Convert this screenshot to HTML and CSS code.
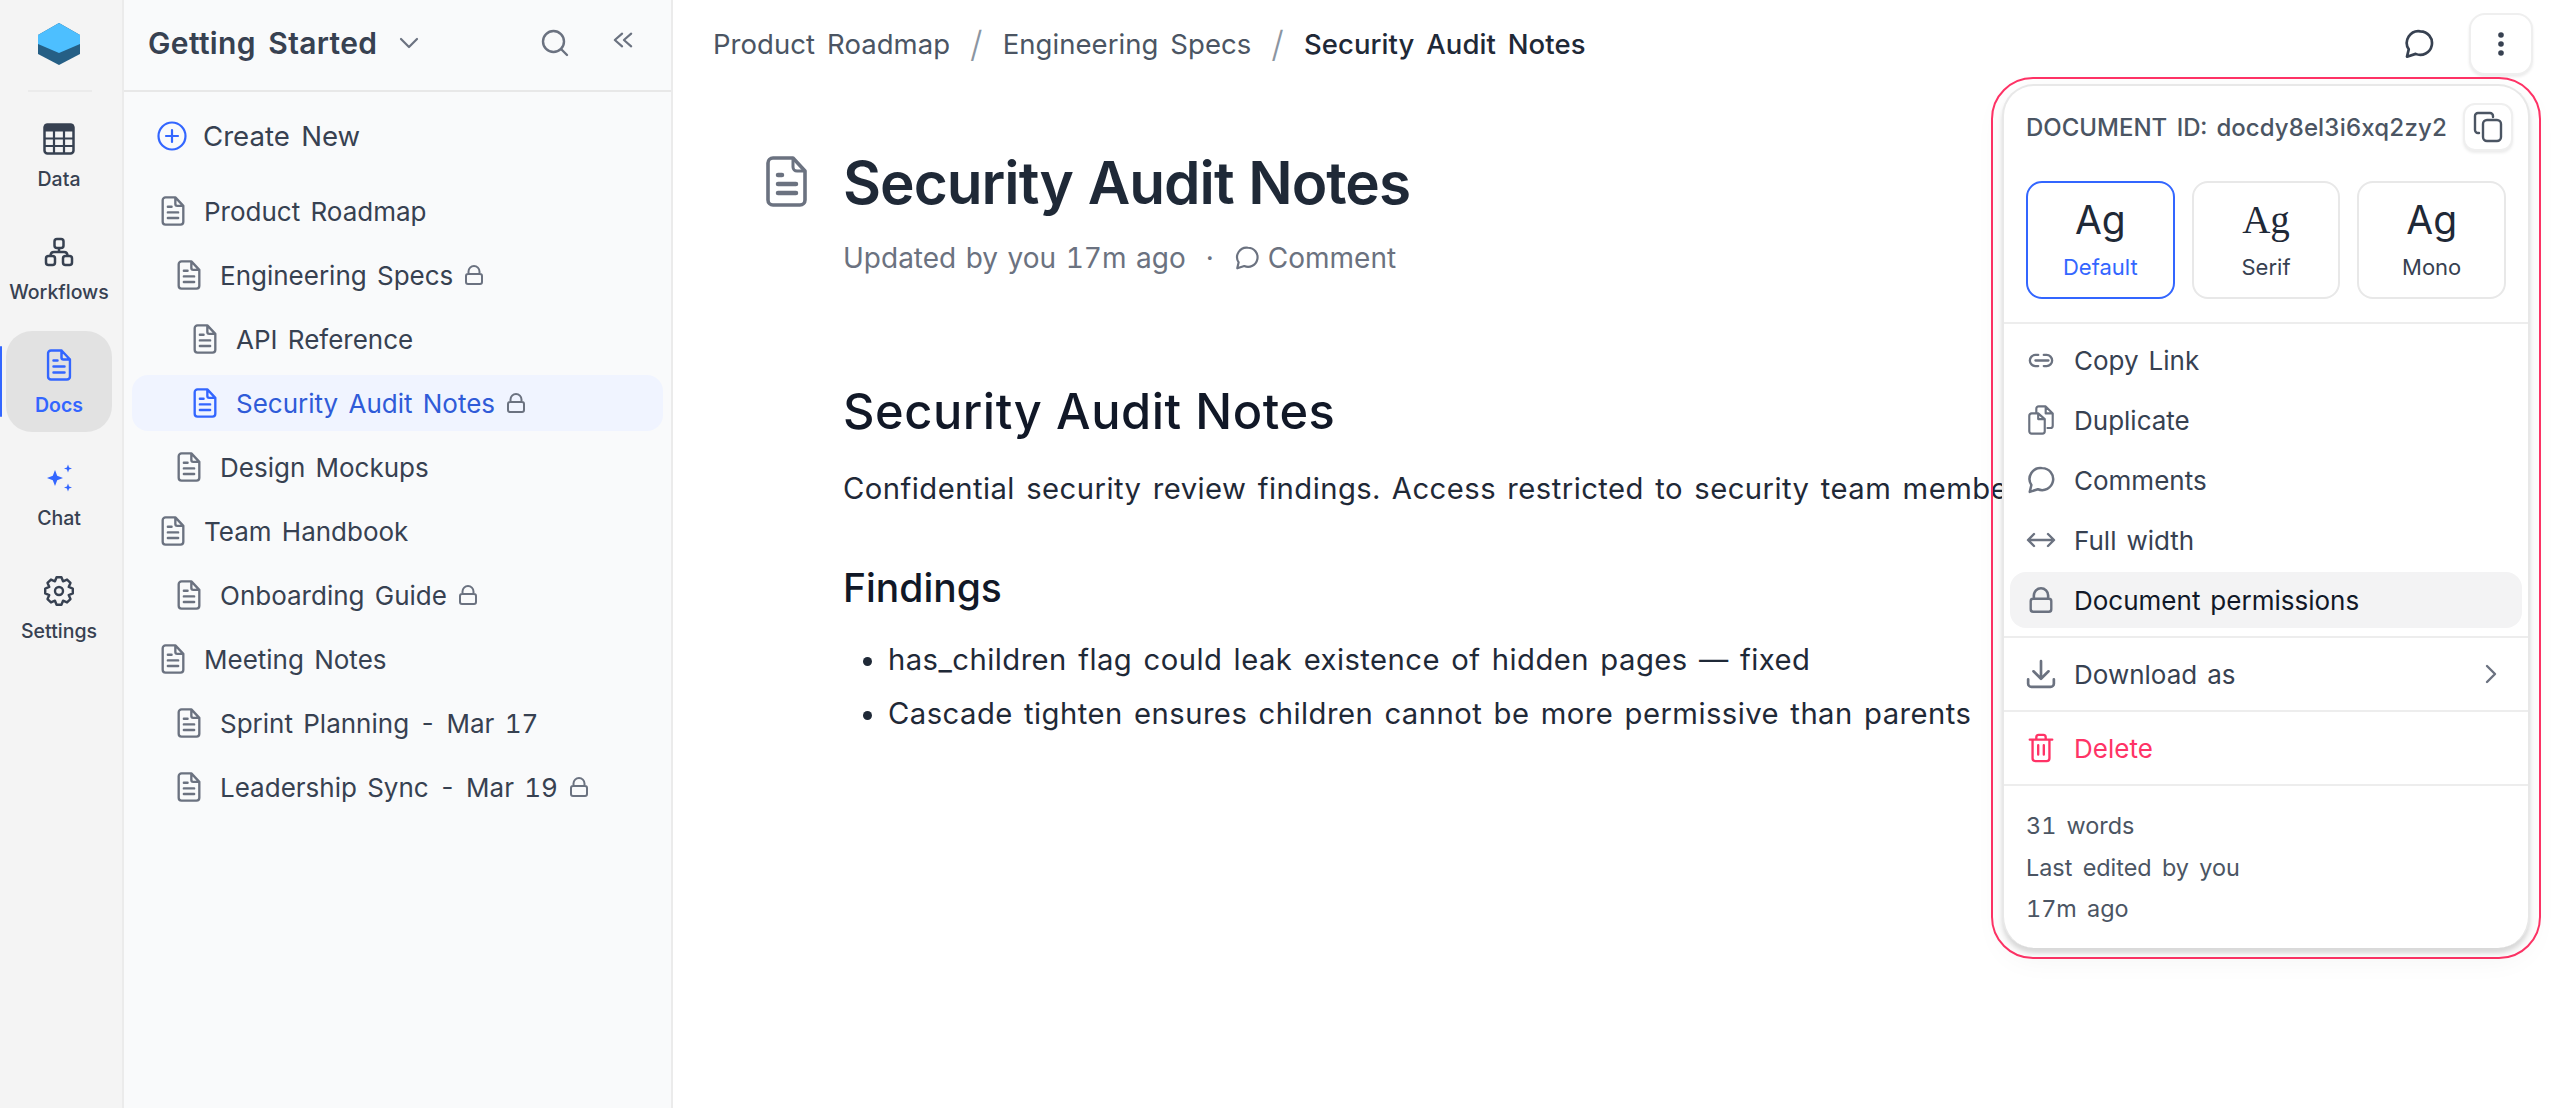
FILE: index.html
```html
<!DOCTYPE html>
<html lang="en">
<head>
<meta charset="utf-8">
<title>Security Audit Notes</title>
<link rel="stylesheet" href="styles.css">
</head>
<body>
<svg class="sprite" width="0" height="0">
  <symbol id="doc" viewBox="0 0 25 32"><path d="M4.500 1.500H15L23.500 10.500V27.500a3 3 0 0 1-3 3H4.500a3 3 0 0 1-3-3V4.500a3 3 0 0 1 3-3z M15 1.500V8.500a2 2 0 0 0 2 2H23.500 M7 11.500H11 M7 17.500H18 M7 23.500H18" fill="none" stroke="currentColor" stroke-width="2.500" stroke-linecap="round" stroke-linejoin="round"/></symbol>
  <symbol id="lock" viewBox="0 0 18 20"><path d="M3.500 9V6.500a5.500 5.500 0 0 1 11 0V9 M3 9H15a2 2 0 0 1 2 2V17a2 2 0 0 1-2 2H3a2 2 0 0 1-2-2V11a2 2 0 0 1 2-2z" fill="none" stroke="currentColor" stroke-width="2" stroke-linecap="round" stroke-linejoin="round"/></symbol>
  <symbol id="chat" viewBox="0 0 24 24"><path d="M13 2.500a8.800 8.800 0 1 1-3.500 16.900L3 21.500l1.300-5.500A8.800 8.800 0 0 1 13 2.500z" fill="none" stroke="currentColor" stroke-width="2" stroke-linejoin="round"/></symbol>
</svg>
<div class="app">
  <nav class="rail">
    <svg class="logo" viewBox="0 0 42 42"><polygon points="21,0 42,12 42,31 21,42 0,31 0,12" fill="#255f85"/><polygon points="21,0 42,12 42,21 21,30 0,21 0,12" fill="#4dbfff"/></svg>
    <div class="rail-sep"></div>
    <a class="rail-item">
      <svg class="rail-icon" viewBox="0 0 32 32"><rect x="1.500" y="1.500" width="29" height="29" rx="3" fill="none" stroke="currentColor" stroke-width="2.500"/><rect x="1.500" y="1.500" width="29" height="7" fill="currentColor"/><path d="M2 15.500H30M2 23H30M11 8V30M21 8V30" stroke="currentColor" stroke-width="2.200"/></svg>
      <span>Data</span>
    </a>
    <a class="rail-item">
      <svg class="rail-icon" viewBox="0 0 32 32"><g fill="none" stroke="currentColor" stroke-width="2.500" stroke-linejoin="round"><rect x="11.500" y="3" width="9" height="9" rx="2.500"/><rect x="3" y="20" width="9" height="9" rx="2.500"/><rect x="20" y="20" width="9" height="9" rx="2.500"/><path d="M16 12V16M7.500 20C7.500 17 9 16 11 16H21C23 16 24.500 17 24.500 20"/></g></svg>
      <span>Workflows</span>
    </a>
    <a class="rail-item active">
      <svg class="rail-icon" viewBox="0 0 25 32"><use href="#doc"/></svg>
      <span>Docs</span>
    </a>
    <a class="rail-item">
      <svg class="rail-icon" viewBox="0 0 32 32"><g fill="#3366ff"><path d="M12 8L14.200 13.800 20 16 14.200 18.200 12 24 9.800 18.200 4 16 9.800 13.800z"/><path d="M25 2.500L26.100 5.400 29 6.500 26.100 7.600 25 10.500 23.900 7.600 21 6.500 23.900 5.400z"/><path d="M25 21.500L26.100 24.400 29 25.500 26.100 26.600 25 29.500 23.900 26.600 21 25.500 23.900 24.400z"/></g></svg>
      <span>Chat</span>
    </a>
    <a class="rail-item">
      <svg class="rail-icon" viewBox="0 0 32 32"><g fill="none" stroke="currentColor" stroke-width="2.400" stroke-linejoin="round"><path d="M13.570 2.210L18.430 2.210L20.020 6.300L24.030 4.530L27.470 7.970L25.700 11.980L29.790 13.570L29.790 18.430L25.700 20.020L27.470 24.030L24.030 27.470L20.020 25.700L18.430 29.790L13.570 29.790L11.980 25.700L7.970 27.470L4.530 24.030L6.300 20.020L2.210 18.430L2.210 13.570L6.300 11.980L4.530 7.970L7.970 4.530L11.980 6.300Z"/><circle cx="16" cy="16" r="4"/></g></svg>
      <span>Settings</span>
    </a>
  </nav>

  <aside class="sidebar">
    <header class="side-head">
      <h2 class="space">Getting Started</h2>
      <svg class="caret" viewBox="0 0 20 12"><path d="M2 2l8 8 8-8" fill="none" stroke="currentColor" stroke-width="2.200" stroke-linecap="round" stroke-linejoin="round"/></svg>
      <svg class="search" viewBox="0 0 28 28"><circle cx="12.500" cy="12.500" r="10.500" fill="none" stroke="currentColor" stroke-width="2.400"/><path d="M20.500 20.500L26 26" stroke="currentColor" stroke-width="2.400" stroke-linecap="round"/></svg>
      <svg class="collapse" viewBox="0 0 22 18"><path d="M10 2L2 9l8 7M20 2l-8 7 8 7" fill="none" stroke="currentColor" stroke-width="2.400" stroke-linecap="round" stroke-linejoin="round"/></svg>
    </header>
    <div class="create">
      <svg class="plus" viewBox="0 0 30 30"><circle cx="15" cy="15" r="13.500" fill="none" stroke="currentColor" stroke-width="2.200"/><path d="M15 9V21M9 15H21" stroke="currentColor" stroke-width="2.200" stroke-linecap="round"/></svg>
      <span>Create New</span>
    </div>
    <ul class="tree">
      <li class="row l0"><svg class="ico"><use href="#doc"/></svg><span>Product Roadmap</span></li>
      <li class="row l1"><svg class="ico"><use href="#doc"/></svg><span>Engineering Specs</span><svg class="lk"><use href="#lock"/></svg></li>
      <li class="row l2"><svg class="ico"><use href="#doc"/></svg><span>API Reference</span></li>
      <li class="row l2 current"><svg class="ico"><use href="#doc"/></svg><span>Security Audit Notes</span><svg class="lk"><use href="#lock"/></svg></li>
      <li class="row l1"><svg class="ico"><use href="#doc"/></svg><span>Design Mockups</span></li>
      <li class="row l0"><svg class="ico"><use href="#doc"/></svg><span>Team Handbook</span></li>
      <li class="row l1"><svg class="ico"><use href="#doc"/></svg><span>Onboarding Guide</span><svg class="lk"><use href="#lock"/></svg></li>
      <li class="row l0"><svg class="ico"><use href="#doc"/></svg><span>Meeting Notes</span></li>
      <li class="row l1"><svg class="ico"><use href="#doc"/></svg><span>Sprint Planning - Mar 17</span></li>
      <li class="row l1"><svg class="ico"><use href="#doc"/></svg><span>Leadership Sync - Mar 19</span><svg class="lk"><use href="#lock"/></svg></li>
    </ul>
  </aside>

  <main class="main">
    <header class="topbar">
      <span class="crumb">Product Roadmap</span><span class="slash">/</span>
      <span class="crumb">Engineering Specs</span><span class="slash">/</span>
      <span class="crumb now">Security Audit Notes</span>
      <svg class="top-chat"><use href="#chat"/></svg>
      <button class="more"><svg viewBox="0 0 8 26" class="dots"><circle cx="4" cy="4" r="2.800"/><circle cx="4" cy="13" r="2.800"/><circle cx="4" cy="22" r="2.800"/></svg></button>
    </header>
    <article class="page">
      <div class="title-row">
        <svg class="title-icon" viewBox="0 0 41 51"><path d="M7 2H27L39 15V44a5 5 0 0 1-5 5H7a5 5 0 0 1-5-5V7a5 5 0 0 1 5-5z" fill="none" stroke="currentColor" stroke-width="3.600" stroke-linejoin="round"/><path d="M27 2V11a4 4 0 0 0 4 4H39" fill="none" stroke="currentColor" stroke-width="3"/><path d="M12 19H16M12 28H30M12 37H30" stroke="currentColor" stroke-width="4.500" stroke-linecap="round"/></svg>
        <div>
          <h1 class="title">Security Audit Notes</h1>
          <p class="meta"><span>Updated by you 17m ago</span><span class="dot">·</span><svg class="meta-chat"><use href="#chat"/></svg><span>Comment</span></p>
        </div>
      </div>
      <div class="body">
        <h2 class="h1">Security Audit Notes</h2>
        <p class="para">Confidential security review findings. Access restricted to security team members.</p>
        <h3 class="h2">Findings</h3>
        <ul class="list">
          <li>has_children flag could leak existence of hidden pages — fixed</li>
          <li>Cascade tighten ensures children cannot be more permissive than parents</li>
        </ul>
      </div>
    </article>
  </main>
</div>

<div class="focus-ring">
  <section class="menu">
    <div class="id-row">
      <span class="doc-id">DOCUMENT ID: docdy8el3i6xq2zy2</span>
      <button class="copy"><svg viewBox="0 0 30 32"><path d="M6 22H5a3 3 0 0 1-3-3V5a3 3 0 0 1 3-3h12a3 3 0 0 1 3 3v1" fill="none" stroke="currentColor" stroke-width="2.400" stroke-linecap="round"/><rect x="10" y="9" width="18" height="21" rx="4" fill="none" stroke="currentColor" stroke-width="2.400"/></svg></button>
    </div>
    <div class="fonts">
      <div class="tile on"><b class="ag">Ag</b><span>Default</span></div>
      <div class="tile"><b class="ag serif">Ag</b><span>Serif</span></div>
      <div class="tile"><b class="ag">Ag</b><span>Mono</span></div>
    </div>
    <div class="group">
      <div class="item"><svg class="i-link" viewBox="0 0 28 16"><path d="M11 2H8a6 6 0 0 0 0 12h3M17 2h3a6 6 0 0 1 0 12h-3M8 8H22" fill="none" stroke="currentColor" stroke-width="2.500" stroke-linecap="round"/></svg><span>Copy Link</span></div>
      <div class="item"><svg viewBox="0 0 28 32"><path d="M9 9V4a2.500 2.500 0 0 1 2.500-2.500H19L26.500 9V22a2.500 2.500 0 0 1-2.500 2.500H20M19 2V9H26M4 9H11L18 15V28a2.500 2.500 0 0 1-2.500 2.500H4A2.500 2.500 0 0 1 1.500 28V11.500A2.500 2.500 0 0 1 4 9zM11 9V15H18" fill="none" stroke="currentColor" stroke-width="2.300" stroke-linejoin="round"/></svg><span>Duplicate</span></div>
      <div class="item"><svg viewBox="0 0 24 24"><use href="#chat"/></svg><span>Comments</span></div>
      <div class="item"><svg viewBox="0 0 30 20"><path d="M3 10H27M8 4L2 10l6 6M22 4l6 6-6 6" fill="none" stroke="currentColor" stroke-width="2.400" stroke-linecap="round" stroke-linejoin="round"/></svg><span>Full width</span></div>
      <div class="item hover"><svg class="i-lock" viewBox="0 0 18 20"><use href="#lock"/></svg><span>Document permissions</span></div>
    </div>
    <div class="group">
      <div class="item"><svg viewBox="0 0 28 28"><path d="M14 2V18M7 11.500L14 18.500l7-7M2 19V23a3 3 0 0 0 3 3H23a3 3 0 0 0 3-3V19" fill="none" stroke="currentColor" stroke-width="2.500" stroke-linecap="round" stroke-linejoin="round"/></svg><span>Download as</span><svg class="chev" viewBox="0 0 12 20"><path d="M2 2l8 8-8 8" fill="none" stroke="currentColor" stroke-width="2.400" stroke-linecap="round" stroke-linejoin="round"/></svg></div>
    </div>
    <div class="group">
      <div class="item danger"><svg viewBox="0 0 28 32"><path d="M2 7H26M9 7V4.500A2.500 2.500 0 0 1 11.500 2h5A2.500 2.500 0 0 1 19 4.500V7M5 7V27a3 3 0 0 0 3 3H20a3 3 0 0 0 3-3V7M11 13V23M17 13V23" fill="none" stroke="currentColor" stroke-width="2.500" stroke-linecap="round" stroke-linejoin="round"/></svg><span>Delete</span></div>
    </div>
    <footer class="stats">
      <div>31 words</div>
      <div>Last edited by you</div>
      <div>17m ago</div>
    </footer>
  </section>
</div>
</body>
</html>
```
FILE: styles.css
```css
* { box-sizing: border-box; }
html, body { margin: 0; height: 100%; overflow: hidden; background: #fff; }
body { font-family: Inter, "Noto Sans", sans-serif; color: #374151; font-variant-numeric: tabular-nums; }
h1, h2, h3, p, ul { margin: 0; padding: 0; }
ul { list-style: none; }
.sprite { position: absolute; }
.app { display: flex; height: 100vh; }

.rail { width: 124px; flex: none; background: #f4f4f4; border-right: 2px solid #ebebeb; display: flex; flex-direction: column; align-items: center; padding-top: 23px; }
.logo { width: 42px; height: 42px; margin-left: -4px; }
.rail-sep { width: 64px; height: 2px; background: #ebebeb; margin: 25px 0 13px -2px; }
.rail-item { position: relative; width: 106px; height: 101px; margin: 0 4px 12px 0; border-radius: 26px; display: flex; flex-direction: column; align-items: center; justify-content: center; gap: 12px; font-size: 19.500px; font-weight: 500; color: #374151; padding-top: 2px; }
.rail-icon { width: 32px; height: 32px; }
.rail-item.active { background: #e2e2e2; color: #3366ff; font-weight: 600; }
.rail-item.active::before { content: ""; position: absolute; left: -6px; top: 15px; width: 2px; height: 71px; background: #3366ff; border-radius: 2px; }

.sidebar { width: 549px; flex: none; background: #f9fafb; border-right: 2px solid #ebebeb; }
.side-head { height: 92px; border-bottom: 2px solid #e8e8e8; display: flex; align-items: center; padding: 0 0 4px 24px; color: #6b7280; }
.space { font-size: 30px; font-weight: 600; color: #374151; line-height: 1; word-spacing: 4px; letter-spacing: .35px; white-space: nowrap; }
.caret { width: 20px; height: 12px; margin-left: 22px; }
.search { width: 28px; height: 28px; margin-left: 122px; }
.collapse { width: 20px; height: 18px; margin: -6px 0 0 44px; }
.create { display: flex; align-items: center; height: 56px; margin-top: 16px; padding-left: 33px; font-size: 27.600px; word-spacing: 4px; gap: 16px; color: #374151; }
.plus { width: 30px; height: 30px; color: #3366ff; }
.tree { margin-top: 19px; padding: 0 8px; }
.row { display: flex; align-items: center; height: 56px; margin-bottom: 8px; font-size: 26px; word-spacing: 3.300px; border-radius: 16px; color: #374151; }
.row.l0 { padding-left: 29px; }
.row.l1 { padding-left: 45px; }
.row.l2 { padding-left: 61px; }
.row.current { background: #f0f4ff; color: #2f5bd8; }
.ico { width: 24px; height: 30px; flex: none; margin-right: 19px; color: #6b7280; }
.current .ico { color: #3366ff; }
.lk { width: 18px; height: 20px; flex: none; margin-left: 12px; color: #6b7280; }

.main { flex: 1; min-width: 0; }
.topbar { height: 90px; display: flex; align-items: center; padding: 0 21px 2px 40px; font-size: 27.500px; word-spacing: 4.500px; letter-spacing: .05px; color: #4b5563; }
.slash { margin: 0 20px; color: #8b95a1; font-size: 36px; font-weight: 300; line-height: 1; }
.now { color: #1f2937; font-weight: 500; }
.top-chat { width: 32px; height: 32px; margin-left: auto; margin-right: 34px; color: #374151; }
.more { width: 64px; height: 62px; background: #fff; border: 2px solid #efefef; border-radius: 16px; box-shadow: 0 2px 3px rgba(0,0,0,.08); padding: 0; display: flex; align-items: center; justify-content: center; }
.dots { width: 8px; height: 26px; fill: #374151; }

.page { padding: 58px 0 0 93px; }
.title-row { display: flex; gap: 36px; }
.title-icon { width: 41px; height: 51px; margin-top: 8px; color: #6b7280; flex: none; }
.title { font-size: 58.500px; line-height: 70px; font-weight: 600; letter-spacing: -1px; color: #1f2937; white-space: nowrap; }
.meta { margin-top: 20px; display: flex; align-items: center; font-size: 28px; word-spacing: 2px; line-height: 40px; color: #6b7280; }
.dot { margin: 0 20px; }
.meta-chat { width: 26px; height: 26px; margin-right: 8px; }
.body { padding-left: 77px; color: #1f2937; white-space: nowrap; }
.h1 { margin-top: 104px; font-size: 48.750px; line-height: 60px; font-weight: 500; letter-spacing: .55px; color: #111827; }
.para { margin-top: 25px; font-size: 29.250px; letter-spacing: .45px; word-spacing: 3px; line-height: 44px; }
.h2 { margin-top: 52px; font-size: 39px; line-height: 50px; font-weight: 500; color: #111827; }
.list { margin-top: 25px; font-size: 29.250px; letter-spacing: .45px; word-spacing: 3px; line-height: 44px; list-style: disc; padding-left: 45px; }
.list li { margin-bottom: 10px; }

.focus-ring { position: absolute; top: 77px; right: 13px; width: 550px; height: 882px; padding: 5px 9px 9px; border: 2px solid #ff3366; border-radius: 42px; }
.menu { height: 100%; background: #fff; border: 2px solid #e8e8e8; border-bottom-width: 0; border-radius: 32px; box-shadow: 0 5px 4px rgba(0,0,0,.12), 0 10px 30px rgba(0,0,0,.05); }
.id-row { display: flex; align-items: center; height: 48px; margin-top: 17px; padding: 0 15px 0 22px; justify-content: space-between; }
.doc-id { font-size: 24px; word-spacing: 3px; font-weight: 500; color: #4b5563; white-space: nowrap; }
.copy { width: 50px; height: 48px; background: #fff; border: 2px solid #efefef; border-radius: 12px; box-shadow: 0 2px 3px rgba(0,0,0,.08); padding: 0; display: flex; align-items: center; justify-content: center; color: #4b5563; }
.copy svg { width: 30px; height: 32px; }
.fonts { display: flex; gap: 17px; padding: 30px 22px 23px; }
.tile { width: 149px; height: 118px; border: 2px solid #e8e8e8; border-radius: 16px; display: flex; flex-direction: column; align-items: center; font-size: 22px; color: #374151; }
.tile.on { border-color: #3366ff; color: #3366ff; }
.ag { font-size: 39px; font-weight: 400; line-height: 46px; margin: 14px 0 11px; color: #1f2937; }
.serif { font-family: "Liberation Serif", serif; }
.group { border-top: 2px solid #ededed; padding: 8px 6px; }
.item { display: flex; align-items: center; height: 56px; margin-bottom: 4px; padding: 0 16px; font-size: 26px; word-spacing: 3px; color: #374151; border-radius: 16px; gap: 18px; }
.group .item:last-child { margin-bottom: 0; }
.item > svg:first-child { width: 30px; height: 30px; flex: none; color: #6b7280; }
.item > svg.i-lock { width: 24px; height: 26px; margin: 0 3px; }
.item > svg.i-link { width: 26px; height: 15px; margin: 0 2px; }
.item.hover { background: #f3f3f4; color: #111827; }
.item.danger, .item.danger > svg:first-child { color: #ff3366; }
.chev { width: 12px; height: 20px; margin-left: auto; margin-right: 9px; color: #6b7280; }
.stats { border-top: 2px solid #ededed; padding: 19px 22px 17px; font-size: 23.400px; word-spacing: 4px; line-height: 41.600px; color: #4b5563; }
```
